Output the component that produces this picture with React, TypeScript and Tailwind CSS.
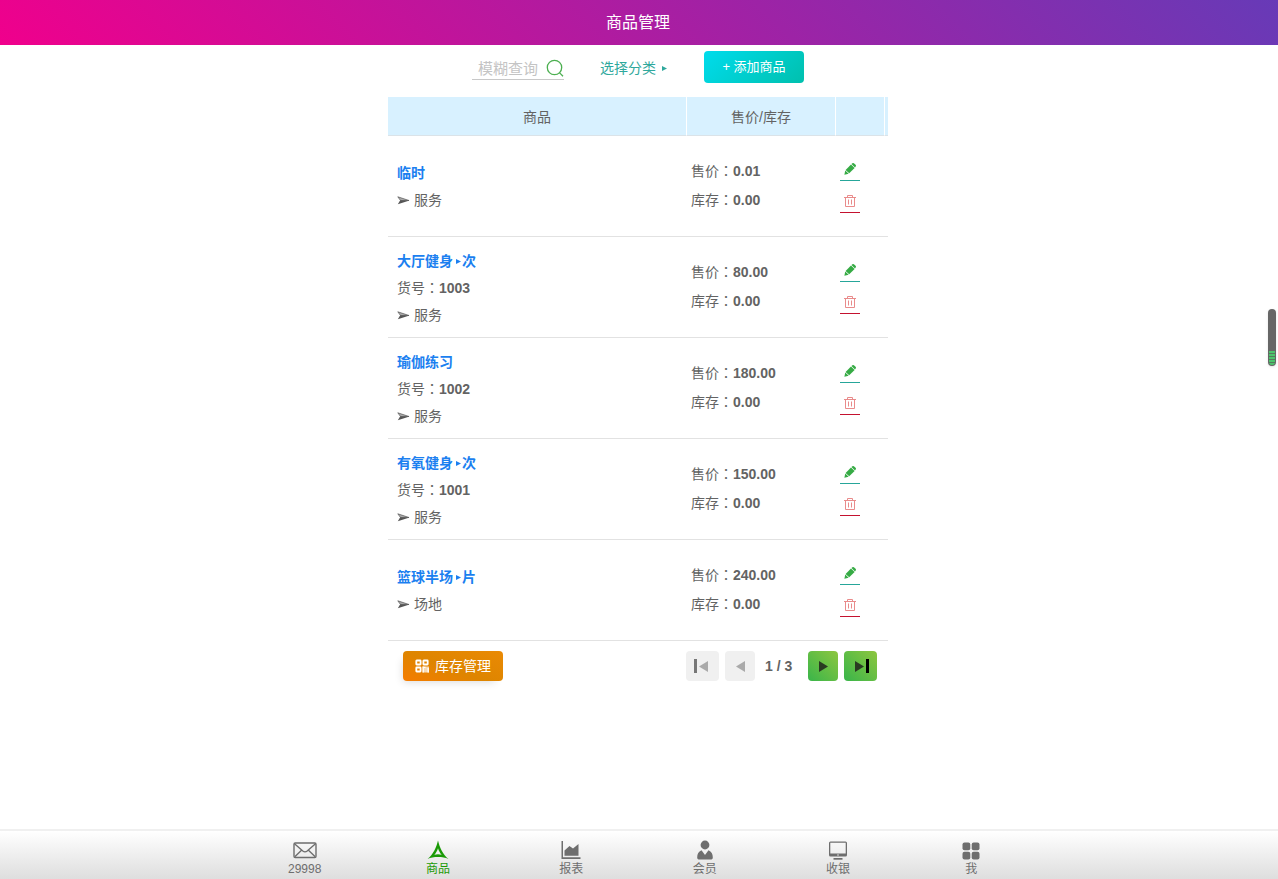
import React from 'react';

interface Product {
  name: string;
  unit?: string;
  code?: string;
  category: string;
  price: string;
  stock: string;
}

const products: Product[] = [
  { name: '临时', category: '服务', price: '0.01', stock: '0.00' },
  { name: '大厅健身', unit: '次', code: '1003', category: '服务', price: '80.00', stock: '0.00' },
  { name: '瑜伽练习', code: '1002', category: '服务', price: '180.00', stock: '0.00' },
  { name: '有氧健身', unit: '次', code: '1001', category: '服务', price: '150.00', stock: '0.00' },
  { name: '篮球半场', unit: '片', category: '场地', price: '240.00', stock: '0.00' },
];

const Triangle = ({ className }: { className: string }) => (
  <svg viewBox="0 0 8 8" preserveAspectRatio="none" className={className} fill="currentColor" aria-hidden="true">
    <path d="M0 0 8 4 0 8Z" />
  </svg>
);

// full-width colon, centred in its cell
const Colon = () => <span className="font-['Noto_Sans_CJK_TC',sans-serif] leading-none">：</span>;

const SearchIcon = () => (
  <svg viewBox="0 0 18 18" className="size-[18px]" fill="none" stroke="#4caf50" strokeWidth="1.3">
    <circle cx="8.5" cy="8.5" r="7.2" />
    <path d="M13.4 13.6 17 17.2" />
  </svg>
);

const PencilIcon = () => (
  <svg viewBox="0 0 14 14" className="size-3.5" fill="#36ab45">
    <path d="M8.5 2 9.3 1.3Q10.1.6 10.9 1.3L12.6 2.8Q13.4 3.6 12.7 4.5L12 5.4Z" />
    <path d="M8 2.5 11.6 5.9 6.2 11.3 2.6 7.9Z" />
    <path d="M2.2 8.4 5.7 11.8 1.4 12.8Z" />
  </svg>
);

const TrashIcon = () => (
  <svg viewBox="0 0 14 14" className="size-3.5" fill="none" stroke="#e98b8b" strokeWidth="1">
    <path d="M1 3.5h12M4.500 3.500v-2h5v2M2.500 3.500v9h9v-9M5.500 5.500v5M8.500 5.500v5" />
  </svg>
);

const QrIcon = () => (
  <svg viewBox="0 0 14 14" className="size-3.5" fill="none" stroke="white" strokeWidth="1.8">
    <rect x="1.3" y="1.5" width="4.300" height="4" rx=".4" />
    <rect x="8.400" y="1.500" width="4.300" height="4" rx=".4" />
    <rect x="1.300" y="8.500" width="4.300" height="4" rx=".4" />
    <path d="M7.500 7.500h6.500v6H7.500Z" fill="white" fillOpacity=".7" stroke="none" />
    <path d="M7.500 8.300h3M8.200 7.500v6M13.200 9v4.500" strokeWidth="1.300" />
  </svg>
);

const MailIcon = () => (
  <svg viewBox="0 0 24 20" className="h-5 w-6" fill="none" stroke="currentColor" strokeWidth="1.4">
    <rect x="1" y="3" width="22" height="14.5" rx="1.2" />
    <path d="M1.5 3.8 9.8 11Q12 12.7 14.2 11L22.5 3.8M1.8 16.8 8.5 10.3M22.2 16.8 15.5 10.3" />
  </svg>
);

const GoodsIcon = () => (
  <svg viewBox="0 0 24 20" className="h-5 w-6" fill="currentColor">
    <path
      fillRule="evenodd"
      d="M12 .5C13.6 7.500 17 14.500 22.400 19 19.500 17.500 16 17 12 17S4.500 17.500 1.600 19C7 14.500 10.400 7.500 12 .500ZM12 8.300C11.200 10.900 10 13.200 8.300 14.700 10.500 14 13.500 14 15.700 14.700 14 13.200 12.800 10.900 12 8.300Z"
    />
  </svg>
);

const ChartIcon = () => (
  <svg viewBox="0 0 24 20" className="h-5 w-6" fill="currentColor">
    <path d="M2.5 1H4V17.200H21.500V19H2.500Z" />
    <path d="M5.500 15.800V10.500L10.500 6 14 8.500 19.500 4V15.800Z" />
  </svg>
);

const MemberIcon = () => (
  <svg viewBox="0 0 24 20" className="h-5 w-6" fill="currentColor">
    <circle cx="12" cy="5" r="4.4" />
    <path d="M8.500 10.200 12 15 15.500 10.200C18.500 11.500 19.800 14 19.800 17.500 19.800 19 19 19.500 17.500 19.500H6.500C5 19.500 4.200 19 4.200 17.500 4.200 14 5.500 11.500 8.500 10.200Z" />
  </svg>
);

const CashierIcon = () => (
  <svg viewBox="0 0 24 20" className="h-5 w-6" fill="currentColor">
    <path
      fillRule="evenodd"
      d="M4.500 1.500H19.500Q21 1.500 21 3V15Q21 16.500 19.500 16.500H4.500Q3 16.500 3 15V3Q3 1.500 4.500 1.500ZM4.300 2.800V13.500H19.700V2.800Z"
    />
    <path d="M7.500 18H16.500V19.700H7.500Z" />
    <circle cx="12" cy="15" r=".7" fill="white" />
  </svg>
);

const GridIcon = () => (
  <svg viewBox="0 0 24 20" className="h-5 w-6" fill="currentColor">
    <rect x="3.500" y="2.500" width="7.800" height="7.800" rx="2" />
    <rect x="12.700" y="2.500" width="7.800" height="7.800" rx="2" />
    <rect x="3.500" y="11.700" width="7.800" height="7.800" rx="2" />
    <rect x="12.700" y="11.700" width="7.800" height="7.800" rx="2" />
  </svg>
);

const tabs = [
  { label: '29998', icon: <MailIcon /> },
  { label: '商品', icon: <GoodsIcon />, active: true },
  { label: '报表', icon: <ChartIcon /> },
  { label: '会员', icon: <MemberIcon /> },
  { label: '收银', icon: <CashierIcon /> },
  { label: '我', icon: <GridIcon /> },
];

const ProductRow = ({ product }: { product: Product }) => (
  <tr className="h-[101px]">
    <td className="border-b border-[#e2e2e2] pl-[9px] pt-0.5 leading-[27px]">
      <a href="#" className="flex h-[27px] items-center font-bold text-[#1b7ff0]">
        {product.name}
        {product.unit && (
          <>
            <Triangle className="ml-[3px] mr-px size-[5px]" />
            {product.unit}
          </>
        )}
      </a>
      {product.code && (
        <p className="h-[27px]">
          货号<Colon /><b>{product.code}</b>
        </p>
      )}
      <p className="flex h-[27px] items-center gap-1">
        <svg viewBox="0 0 13 9" className="h-[9px] w-[13px]" aria-hidden="true">
          <path d="M.8.8 12 4.5 3.500 4.500Z" fill="#555" fillOpacity=".5" stroke="#555" strokeWidth=".7" />
          <path d="M.8 8.200 3.200 4.300 12.500 4.500Z" fill="#555" />
        </svg>
        {product.category}
      </p>
    </td>
    <td className="border-b border-[#e2e2e2] pl-1 leading-[29px]">
      <p className="h-[29px]">售价<Colon /><b>{product.price}</b></p>
      <p className="h-[29px]">库存<Colon /><b>{product.stock}</b></p>
    </td>
    <td colSpan={2} className="border-b border-[#e2e2e2] pb-0.5 pl-1">
      <div className="flex flex-col gap-2">
        <button aria-label="编辑" className="flex h-6 w-5 items-center justify-center border-b border-[#26a69a]">
          <PencilIcon />
        </button>
        <button aria-label="删除" className="flex h-6 w-5 items-center justify-center border-b border-[#c4122f]">
          <TrashIcon />
        </button>
      </div>
    </td>
  </tr>
);

export default function App() {
  return (
    <div className="flex min-h-screen flex-col bg-white font-['Liberation_Sans','Noto_Sans_CJK_SC',sans-serif] text-sm text-[#636363]">
      <header className="flex h-[45px] items-center justify-center bg-[linear-gradient(45deg,#f0008c,#673ab7)] pr-0.5">
        <h1 className="text-base text-white">商品管理</h1>
      </header>

      <main className="mx-auto w-full max-w-[502px] flex-1 pr-0.5">
        <div className="flex h-[52px] items-start justify-center gap-9 pt-1.5">
          <label className="mt-1.5 flex h-[23px] w-[92px] items-center border-b border-[#c8c8c8] pl-1.5">
            <input
              type="text"
              aria-label="模糊查询"
              placeholder="模糊查询"
              className="w-[68px] bg-transparent pt-0.5 text-[15px] outline-none placeholder:text-[#c4c4c4]"
            />
            <SearchIcon />
          </label>
          <button className="flex h-[34px] w-[68px] items-center gap-1.5 whitespace-nowrap text-[#2fa89c]">
            选择分类
            <Triangle className="size-[5px]" />
          </button>
          <button className="h-8 w-[100px] rounded bg-[linear-gradient(135deg,#00dcec,#00c0ae)] text-[13px] text-white">
            + 添加商品
          </button>
        </div>

        <table className="w-full table-fixed border-separate border-spacing-0">
          <colgroup>
            <col />
            <col className="w-[149px]" />
            <col className="w-[49px]" />
            <col className="w-[3px]" />
          </colgroup>
          <thead>
            <tr className="h-[39px] bg-[#d8f1ff]">
              <th className="border-b border-r border-b-[#dbe3e8] border-r-white pt-0.5 font-normal">商品</th>
              <th className="border-b border-r border-b-[#dbe3e8] border-r-white pt-0.5 font-normal">售价/库存</th>
              <td className="border-b border-r border-b-[#dbe3e8] border-r-white" />
              <td className="border-b border-[#dbe3e8]" />
            </tr>
          </thead>
          <tbody>
            {products.map((product) => (
              <ProductRow key={product.name} product={product} />
            ))}
          </tbody>
        </table>

        <div className="flex items-center pl-[15px] pr-[11px] pt-2.5">
          <button className="mr-auto flex h-[30px] w-[100px] items-center justify-center gap-1.5 rounded bg-[linear-gradient(20deg,#f57c00,#de8500_45%,#ea8a04)] text-white shadow-[-4px_5px_8px_-4px_rgba(0,0,0,0.15)]">
            <QrIcon />
            库存管理
          </button>
          <button disabled aria-label="首页" className="flex h-[30px] w-[33px] items-center justify-start gap-0.5 rounded bg-[#f0f0f0] pl-2 text-[#aaa]">
            <span className="h-3.5 w-[3px] bg-[#777]" />
            <Triangle className="h-[11px] w-[9px] rotate-180" />
          </button>
          <button disabled aria-label="上一页" className="ml-1.5 flex h-[30px] w-[30px] items-center justify-center rounded bg-[#f0f0f0] text-[#aaa]">
            <Triangle className="h-[11px] w-[9px] rotate-180" />
          </button>
          <b className="mx-1.5 w-[41px] pl-1">1 / 3</b>
          <button aria-label="下一页" className="flex h-[30px] w-[30px] items-center justify-center rounded bg-[linear-gradient(45deg,#39b54a,#8dc63f)] text-[#2a3a22]">
            <Triangle className="h-[11px] w-[9px]" />
          </button>
          <button aria-label="末页" className="ml-1.5 flex h-[30px] w-[33px] items-center justify-end gap-0.5 rounded bg-[linear-gradient(45deg,#39b54a,#8dc63f)] pr-2 text-[#2a3a22]">
            <Triangle className="h-[11px] w-[9px]" />
            <span className="h-3.5 w-[3px] bg-black" />
          </button>
        </div>
      </main>

      {/* floating scroll progress */}
      <div className="fixed right-0.5 top-[309px] flex h-[57px] w-2 flex-col justify-end rounded-full bg-[#666] p-px shadow">
        <div className="h-3.5 rounded-b-full bg-[repeating-linear-gradient(#4cc46c_0_2px,#557a5e_2px_3px)]" />
      </div>

      <nav className="border-t-2 border-[#f0f0f0] bg-linear-to-b from-white to-[#dedede] pr-0.5">
        <div className="mx-auto grid h-12 max-w-[800px] grid-cols-6 pt-[9px]">
          {tabs.map((tab) => (
            <a
              key={tab.label}
              href="#"
              className={`flex flex-col items-center text-xs leading-[18px] ${tab.active ? 'text-[#1a9a06]' : 'text-[#6e6e6e]'}`}
            >
              {tab.icon}
              {tab.label}
            </a>
          ))}
        </div>
      </nav>
    </div>
  );
}
